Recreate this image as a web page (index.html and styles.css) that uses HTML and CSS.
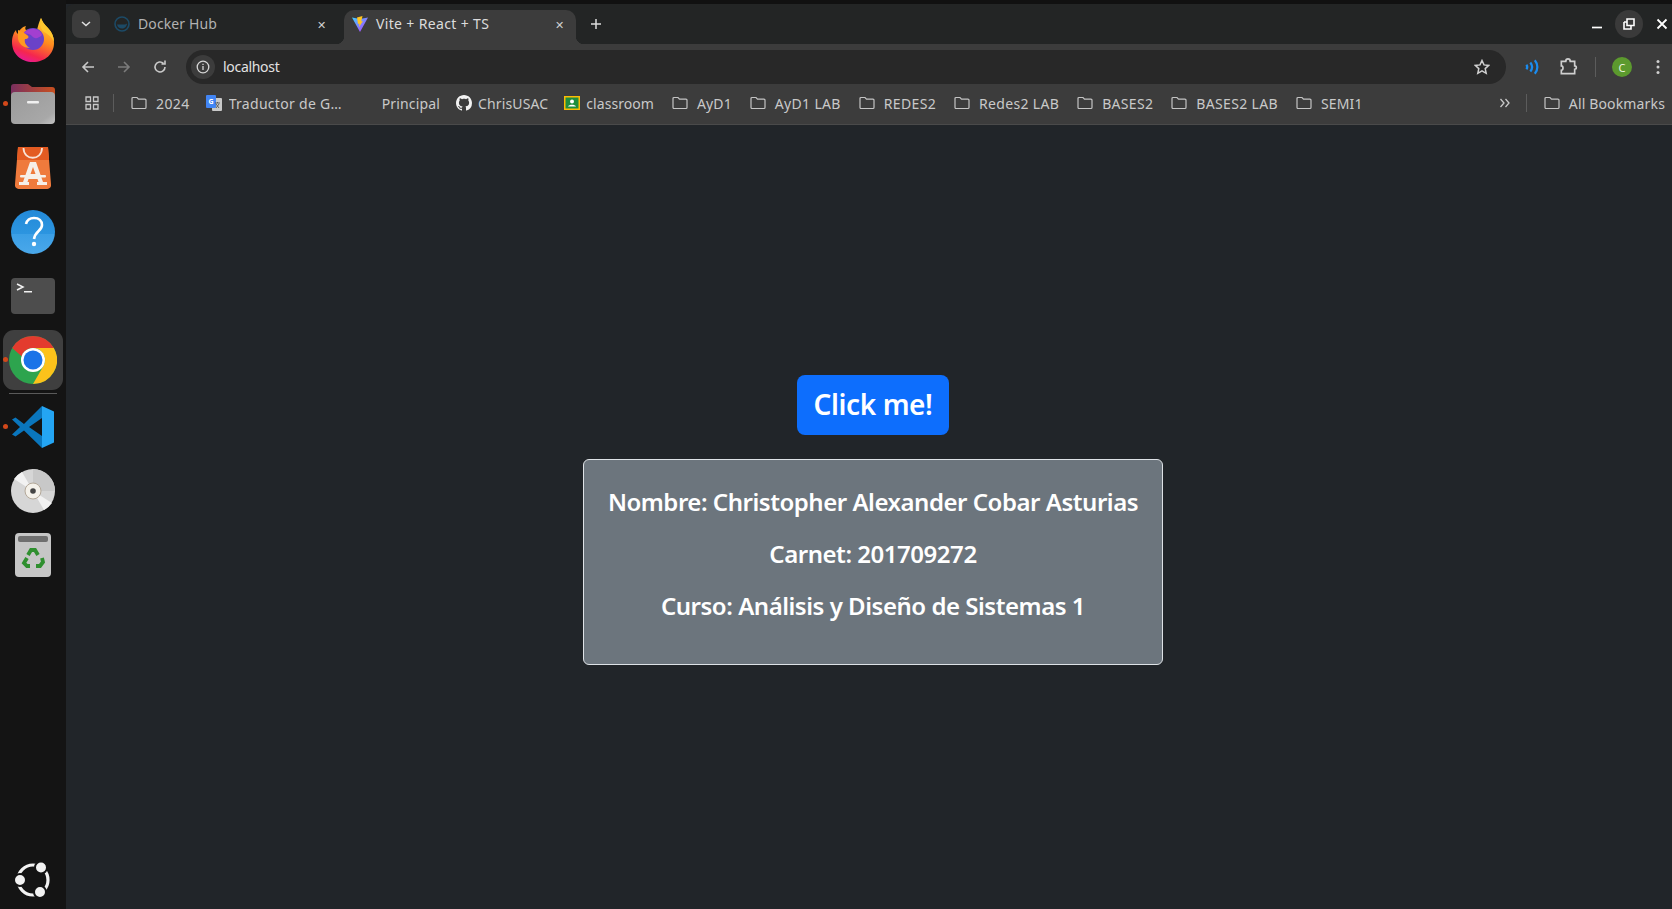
FILE: index.html
```html
<!DOCTYPE html>
<html lang="es">
<head>
<meta charset="utf-8">
<title>Vite + React + TS</title>
<link rel="stylesheet" href="styles.css">
</head>
<body>
<div class="desktop">
  <nav class="dock">
    <div class="dock-item">
      <svg class="di" viewBox="0 0 44 44" width="44" height="44"><defs><linearGradient id="ff" x1="0.7" y1="0" x2="0.3" y2="1"><stop offset="0" stop-color="#ffd33a"/><stop offset=".45" stop-color="#ff8a1e"/><stop offset=".8" stop-color="#f5274e"/><stop offset="1" stop-color="#e6199b"/></linearGradient></defs><path d="M30 0c1 3 3 6 7 10 5 5 6 11 6 15 0 11-9 19-21 19S1 36 1 24c0-5 2-10 4-12 0 2 1 3 2 4 1-4 4-7 8-8-1 2-1 3 0 4 3-1 8-1 11 0 1-4 2-8 4-12z" fill="url(#ff)"/><path d="M30 0c1 3 3 6 7 10 4 4 6 9 6 14-2-5-6-8-10-10-3-2-5-9-3-14z" fill="#ffc72e"/><circle cx="22" cy="21" r="11" fill="#6a42c8"/><path d="M12 16c4-1 7 0 9 2 2 3 6 3 10-1-1-4-5-6-9-6-4 0-8 2-10 5z" fill="#a33fd0"/><path d="M7 12c4 1 6 3 9 5 3 2 1 4-2 4-1 3 1 7 5 9-7 0-12-5-12-10 0-3 0-6 0-8z" fill="#ff9a1f"/></svg>
    </div>
    <div class="dock-item running">
      <svg class="di" viewBox="0 0 44 40" width="44" height="40"><defs><linearGradient id="fol" x1="0" y1="0" x2="1" y2="0"><stop offset="0" stop-color="#7a2f5f"/><stop offset="1" stop-color="#c9501f"/></linearGradient><linearGradient id="fg" x1="0" y1="0" x2="1" y2="1"><stop offset="0" stop-color="#9a9a9a"/><stop offset=".8" stop-color="#a8a8a8"/><stop offset="1" stop-color="#c4c4c4"/></linearGradient></defs><path d="M3 0h14l4 3h20a3 3 0 0 1 3 3v14H0V3a3 3 0 0 1 3-3z" fill="url(#fol)"/><rect y="8" width="44" height="32" rx="4" fill="url(#fg)"/><rect x="16" y="17" width="12" height="2.500" rx="1" fill="#f0f0f0"/></svg>
    </div>
    <div class="dock-item">
      <svg class="di" viewBox="0 0 36 42" width="36" height="42"><path d="M3 0h30l3 37a4 4 0 0 1-4 5H4a4 4 0 0 1-4-5z" fill="#ef7a3c"/><path d="M3 0h30l1 13H2z" fill="#e35b22"/><path d="M8.500 1c0 13 18.500 13 18.500 0" fill="none" stroke="#f8e2d6" stroke-width="1.800"/><path fill-rule="evenodd" d="M15 15h6l7 20h4v3H22v-3h1.500l-1-3h-9l-1 3H14v3H4v-3h4zM15.500 27h5L18 20z" fill="#f6efe8"/><rect x="5" y="28" width="26" height="2.500" rx="1" fill="#f6efe8"/></svg>
    </div>
    <div class="dock-item">
      <svg class="di" viewBox="0 0 44 44" width="44" height="44"><defs><linearGradient id="hp" x1="0" y1="0" x2="0" y2="1"><stop offset="0" stop-color="#2389d8"/><stop offset=".55" stop-color="#2c95e0"/><stop offset=".55" stop-color="#3b9fe6"/><stop offset="1" stop-color="#4aa8ea"/></linearGradient></defs><circle cx="22" cy="22" r="22" fill="url(#hp)"/><path d="M15 14c1-4 4-6 8-6 5 0 8 3 8 7 0 6-7 6-8 14" fill="none" stroke="#fff" stroke-width="2.600"/><circle cx="23" cy="34" r="2.200" fill="#fff"/></svg>
    </div>
    <div class="dock-item">
      <svg class="di" viewBox="0 0 44 36" width="44" height="36"><rect width="44" height="36" rx="4" fill="#4d4d4d"/><path d="M6 6l6 3-6 3" fill="none" stroke="#f2f2f2" stroke-width="1.500"/><rect x="13" y="13" width="8" height="1.500" fill="#f2f2f2"/></svg>
    </div>
    <div class="dock-item running active">
      <svg class="di" viewBox="0 0 48 48" width="48" height="48"><circle cx="24" cy="24" r="24" fill="#2da44e"/><path d="M24 0a24 24 0 0 1 20.800 12H24a12 12 0 0 0-11.400 8.200L3.200 12A24 24 0 0 1 24 0z" fill="#e33b2e"/><path d="M44.800 12A24 24 0 0 1 24 48l10.400-18A12 12 0 0 0 34.400 18 12 12 0 0 0 24 12z" fill="#fcc21b"/><circle cx="24" cy="24" r="12" fill="#fff"/><circle cx="24" cy="24" r="9.500" fill="#1a73e8"/></svg>
    </div>
    <div class="dock-sep"></div>
    <div class="dock-item running">
      <svg class="di" viewBox="0 0 42 42" width="42" height="42"><path d="M30 0 42 5.500v31L30 42z" fill="#24a5f3"/><path d="M30 0 12 18 3.500 11.500 0 13.500l8 7.500-8 7.500 3.500 2L12 24.500 30 42V30L17 21 30 12z" fill="#0a76bd"/></svg>
    </div>
    <div class="dock-item">
      <svg class="di" viewBox="0 0 44 44" width="44" height="44"><circle cx="22" cy="22" r="22" fill="#d6d6d6"/><path d="M22 22 3 10a22 22 0 0 1 8-7zM22 22l19 12a22 22 0 0 1-8 7z" fill="#f2f2f2"/><path d="M22 0a22 22 0 0 1 22 22H22z" fill="#c8c8c8"/><circle cx="22" cy="22" r="8" fill="#f4f1ea" stroke="#b3a899"/><circle cx="22" cy="22" r="2.800" fill="#444"/></svg>
    </div>
    <div class="dock-item">
      <svg class="di" viewBox="0 0 36 44" width="36" height="44"><rect width="36" height="44" rx="4" fill="#c6c6c6"/><rect x="3" y="3" width="30" height="6" rx="2" fill="#6f6f6f"/><g fill="none" stroke="#2f8f2f" stroke-width="3.800"><path d="M13 22l3-5h4l3 5"/><path d="M27 25l1 4-3 4h-4"/><path d="M15 33h-3l-3-3 3-5"/></g></svg>
    </div>
    <div class="dock-item dock-bottom">
      <svg class="di" viewBox="0 0 36 36" width="36" height="36"><circle cx="18" cy="18" r="15" fill="none" stroke="#f2f2f2" stroke-width="3.200"/><g fill="#f2f2f2" stroke="#141414" stroke-width="2"><circle cx="5" cy="18" r="6"/><circle cx="26" cy="5.500" r="6"/><circle cx="25" cy="30" r="6"/></g></svg>
    </div>
  </nav>

  <div class="browser">
    <div class="tabstrip">
      <button class="tab-menu"><svg viewBox="0 0 10 6" width="10" height="6"><path d="M1 1l4 3.500L9 1" fill="none" stroke="#e0e0e0" stroke-width="1.500"/></svg></button>
      <div class="tab">
        <svg viewBox="0 0 16 16" width="16" height="16"><circle cx="8" cy="8" r="7" fill="none" stroke="#1c4a66" stroke-width="1.600"/><path d="M3 8.500h8c1 0 1.500-1 2-1-.2 3-2.500 5-5 5s-4.500-1.500-5-4z" fill="#1c4a66"/></svg>
        <span class="tab-title">Docker Hub</span>
        <span class="tab-x">✕</span>
      </div>
      <div class="tab tab-active">
        <svg viewBox="0 0 16 16" width="16" height="16"><defs><linearGradient id="vt" x1="0" y1="0" x2="1" y2="1"><stop offset="0" stop-color="#41d1ff"/><stop offset="1" stop-color="#bd34fe"/></linearGradient></defs><path d="M0 1.500 8 3l8-1.500L8 16z" fill="url(#vt)"/><path d="M10.500 0 5 1.500 6 8l1.500-.5L7 11l4-6-1.800.4z" fill="#ffc41f"/></svg>
        <span class="tab-title">Vite + React + TS</span>
        <span class="tab-x">✕</span>
      </div>
      <span class="tab-plus"><svg viewBox="0 0 12 12" width="12" height="12"><path d="M6 1v10M1 6h10" stroke="#dcdcdc" stroke-width="1.500"/></svg></span>
      <div class="win-controls">
        <span class="win-btn"><svg viewBox="0 0 12 12" width="12" height="12"><path d="M1 9.500h10" stroke="#fff" stroke-width="1.700"/></svg></span>
        <span class="win-btn win-restore"><svg viewBox="0 0 12 12" width="12" height="12"><path d="M4 1h7v6.500H4zM1 4h3M1 4v7h7V7.500" fill="none" stroke="#fff" stroke-width="1.600"/></svg></span>
        <span class="win-btn win-close"><svg viewBox="0 0 12 12" width="12" height="12"><path d="M1.500 1.500l9 9M10.500 1.500l-9 9" stroke="#fff" stroke-width="1.800"/></svg></span>
      </div>
    </div>

    <div class="toolbar">
      <span class="tb-btn"><svg viewBox="0 0 16 16" width="16" height="16"><path d="M14 8H3M8 3 3 8l5 5" fill="none" stroke="#c9c9c9" stroke-width="1.600"/></svg></span>
      <span class="tb-btn"><svg viewBox="0 0 16 16" width="16" height="16"><path d="M2 8h11M8 3l5 5-5 5" fill="none" stroke="#7b7b7b" stroke-width="1.600"/></svg></span>
      <span class="tb-btn"><svg viewBox="0 0 16 16" width="16" height="16"><path d="M13 8a5 5 0 1 1-1.600-3.700M13 1.500V5H9.500" fill="none" stroke="#c9c9c9" stroke-width="1.600"/></svg></span>
      <div class="omnibox">
        <span class="info"><svg viewBox="0 0 14 14" width="14" height="14"><circle cx="7" cy="7" r="5.800" fill="none" stroke="#d6d6d6" stroke-width="1.300"/><path d="M7 6v4M7 3.800v1.200" stroke="#d6d6d6" stroke-width="1.300"/></svg></span>
        <span class="url">localhost</span>
        <svg class="star" viewBox="0 0 16 16" width="16" height="16"><path d="M8 1.500l2 4.400 4.800.5-3.600 3.200 1 4.700L8 11.900 3.800 14.300l1-4.700L1.200 6.400 6 5.900z" fill="none" stroke="#d0d0d0" stroke-width="1.500"/></svg>
      </div>
      <span class="tb-act"><svg viewBox="0 0 16 16" width="18" height="18"><path d="M3 6c1 1.300 1 2.700 0 4M6.500 4c2 2.500 2 5.500 0 8M10.500 2c3 3.500 3 8.500 0 12" fill="none" stroke="#1a8cf0" stroke-width="2"/></svg></span>
      <span class="tb-act"><svg viewBox="0 0 18 18" width="20" height="20"><path d="M3 4h4c0-3 4-3 4 0h4v4c2 0 2 3 0 3v4H3v-3c2 0 2-4 0-4z" fill="none" stroke="#cfcfcf" stroke-width="1.500"/></svg></span>
      <span class="tb-sep"></span>
      <span class="tb-act"><span class="avatar">C</span></span>
      <span class="tb-more"><svg viewBox="0 0 4 16" width="4" height="16"><circle cx="2" cy="2.500" r="1.500" fill="#cfcfcf"/><circle cx="2" cy="8" r="1.500" fill="#cfcfcf"/><circle cx="2" cy="13.500" r="1.500" fill="#cfcfcf"/></svg></span>
    </div>

    <div class="bookmarks">
      <svg class="bm-apps" viewBox="0 0 14 14" width="14" height="14"><path d="M1 1h4.500v4.500H1zM8.500 1H13v4.500H8.500zM1 8.500h4.500V13H1zM8.500 8.500H13V13H8.500z" fill="none" stroke="#c8c8c8" stroke-width="1.300"/></svg>
      <span class="bm-sep bm-sep-a"></span>
      <a class="bm folder bm-2024"><svg class="fo" viewBox="0 0 16 14" width="16" height="14"><path d="M1 2.500a1 1 0 0 1 1-1h4l1.500 1.700H14a1 1 0 0 1 1 1v7.300a1 1 0 0 1-1 1H2a1 1 0 0 1-1-1z" fill="none" stroke="#c4c4c4" stroke-width="1.200"/></svg>2024</a>
      <a class="bm bm-trad"><svg viewBox="0 0 16 16" width="16" height="16"><rect x="6" y="3" width="10" height="13" rx="1" fill="#c9c9c9"/><rect width="10" height="13" rx="1" fill="#4285f4"/><text class="gl" x="2.500" y="9">G</text><path d="M9 8h5M11.500 7v1M10 13l3-4M10 9l3 4" stroke="#555" stroke-width=".9" fill="none"/></svg><span class="bm-trunc">Traductor de G…</span></a>
      <a class="bm bm-principal">Principal</a>
      <a class="bm bm-gh"><svg viewBox="0 0 16 16" width="16" height="16"><path fill="#f2f2f2" d="M8 0C3.580 0 0 3.580 0 8c0 3.540 2.290 6.530 5.470 7.590.4.070.55-.17.550-.38 0-.19-.01-.82-.01-1.490-2.010.370-2.530-.49-2.690-.94-.09-.23-.48-.94-.82-1.130-.28-.15-.68-.52-.01-.53.630-.01 1.080.58 1.230.82.720 1.210 1.870.87 2.330.66.070-.52.280-.87.510-1.070-1.780-.2-3.640-.89-3.640-3.950 0-.87.310-1.590.82-2.150-.08-.2-.36-1.020.08-2.120 0 0 .670-.21 2.200.82.640-.18 1.320-.27 2-.27s1.360.090 2 .27c1.530-1.040 2.200-.82 2.200-.82.440 1.100.160 1.920.080 2.120.510.560.820 1.270.820 2.150 0 3.070-1.870 3.750-3.650 3.950.290.250.540.730.540 1.480 0 1.070-.010 1.930-.010 2.200 0 .210.150.460.550.380A8.010 8.010 0 0 0 16 8c0-4.420-3.580-8-8-8z"/></svg>ChrisUSAC</a>
      <a class="bm bm-class"><svg viewBox="0 0 16 16" width="16" height="16"><rect x="0" y="1" width="16" height="14" fill="#fbbc04"/><rect x="1.500" y="2.500" width="13" height="11" fill="#1e8e3e"/><circle cx="8" cy="6.500" r="2" fill="#fff"/><path d="M4 11.500c1-2.500 7-2.500 8 0z" fill="#fff"/></svg>classroom</a>
      <a class="bm folder"><svg class="fo" viewBox="0 0 16 14" width="16" height="14"><path d="M1 2.500a1 1 0 0 1 1-1h4l1.500 1.700H14a1 1 0 0 1 1 1v7.300a1 1 0 0 1-1 1H2a1 1 0 0 1-1-1z" fill="none" stroke="#c4c4c4" stroke-width="1.200"/></svg>AyD1</a>
      <a class="bm folder caps"><svg class="fo" viewBox="0 0 16 14" width="16" height="14"><path d="M1 2.500a1 1 0 0 1 1-1h4l1.500 1.700H14a1 1 0 0 1 1 1v7.300a1 1 0 0 1-1 1H2a1 1 0 0 1-1-1z" fill="none" stroke="#c4c4c4" stroke-width="1.200"/></svg>AyD1 LAB</a>
      <a class="bm folder caps"><svg class="fo" viewBox="0 0 16 14" width="16" height="14"><path d="M1 2.500a1 1 0 0 1 1-1h4l1.500 1.700H14a1 1 0 0 1 1 1v7.300a1 1 0 0 1-1 1H2a1 1 0 0 1-1-1z" fill="none" stroke="#c4c4c4" stroke-width="1.200"/></svg>REDES2</a>
      <a class="bm folder caps"><svg class="fo" viewBox="0 0 16 14" width="16" height="14"><path d="M1 2.500a1 1 0 0 1 1-1h4l1.500 1.700H14a1 1 0 0 1 1 1v7.300a1 1 0 0 1-1 1H2a1 1 0 0 1-1-1z" fill="none" stroke="#c4c4c4" stroke-width="1.200"/></svg>Redes2 LAB</a>
      <a class="bm folder caps"><svg class="fo" viewBox="0 0 16 14" width="16" height="14"><path d="M1 2.500a1 1 0 0 1 1-1h4l1.500 1.700H14a1 1 0 0 1 1 1v7.300a1 1 0 0 1-1 1H2a1 1 0 0 1-1-1z" fill="none" stroke="#c4c4c4" stroke-width="1.200"/></svg>BASES2</a>
      <a class="bm folder caps"><svg class="fo" viewBox="0 0 16 14" width="16" height="14"><path d="M1 2.500a1 1 0 0 1 1-1h4l1.500 1.700H14a1 1 0 0 1 1 1v7.300a1 1 0 0 1-1 1H2a1 1 0 0 1-1-1z" fill="none" stroke="#c4c4c4" stroke-width="1.200"/></svg>BASES2 LAB</a>
      <a class="bm folder"><svg class="fo" viewBox="0 0 16 14" width="16" height="14"><path d="M1 2.500a1 1 0 0 1 1-1h4l1.500 1.700H14a1 1 0 0 1 1 1v7.300a1 1 0 0 1-1 1H2a1 1 0 0 1-1-1z" fill="none" stroke="#c4c4c4" stroke-width="1.200"/></svg>SEMI1</a>
      <div class="bm-right">
        <svg viewBox="0 0 12 10" width="12" height="10"><path d="M1.500 1l3.500 4-3.500 4M6.500 1l3.500 4-3.500 4" fill="none" stroke="#c8c8c8" stroke-width="1.300"/></svg>
        <span class="bm-sep bm-sep-b"></span>
        <a class="bm folder bm-all"><svg class="fo" viewBox="0 0 16 14" width="16" height="14"><path d="M1 2.500a1 1 0 0 1 1-1h4l1.500 1.700H14a1 1 0 0 1 1 1v7.300a1 1 0 0 1-1 1H2a1 1 0 0 1-1-1z" fill="none" stroke="#c4c4c4" stroke-width="1.200"/></svg>All Bookmarks</a>
      </div>
    </div>

    <main class="content">
      <button class="btn-click">Click me!</button>
      <section class="card">
        <p>Nombre: Christopher Alexander Cobar Asturias</p>
        <p>Carnet: 201709272</p>
        <p>Curso: Análisis y Diseño de Sistemas 1</p>
      </section>
    </main>
  </div>
</div>
</body>
</html>
```

FILE: styles.css
```css
* { box-sizing: border-box; }
html, body { margin: 0; height: 100%; overflow: hidden; }
body { background: #111; font-family: "Noto Sans", sans-serif; }
.desktop { display: flex; height: 909px; }

.dock { width: 66px; flex: none; background: #141414; padding-top: 8px; display: flex; flex-direction: column; }
.dock-item { height: 64px; display: flex; align-items: center; justify-content: center; position: relative; flex: none; }
.dock-item.running::before { content: ""; position: absolute; left: 3px; top: 50%; margin-top: -3px; width: 5px; height: 5px; border-radius: 50%; background: #d2481a; }
.dock-item.active::after { content: ""; position: absolute; left: 3px; top: 2px; width: 60px; height: 60px; border-radius: 11px; background: #3f3f3f; }
.dock-item.active .di { position: relative; z-index: 1; }
.dock-item.active::before { z-index: 2; }
.dock-sep { height: 3px; margin: 0 9px; flex: none; display: flex; align-items: center; }
.dock-sep::before { content: ""; display: block; width: 100%; height: 1px; background: #5a5a5a; }
.dock-bottom { margin-top: auto; height: 56px; margin-bottom: 1px; }

.browser { flex: 1; min-width: 0; display: flex; flex-direction: column; margin-top: 4px; background: #212529; }

.tabstrip { height: 40px; background: #232525; display: flex; align-items: flex-start; padding: 6px 0 0 6px; border-top-left-radius: 8px; flex: none; }
.tab-menu { width: 28px; height: 28px; border: 0; border-radius: 8px; background: #3c3c3c; padding: 0; display: flex; align-items: center; justify-content: center; flex: none; }
.tab { width: 236px; height: 34px; margin-left: 4px; padding: 0 14px 6px 10px; display: flex; align-items: center; flex: none; font-size: 14px; letter-spacing: .1px; color: #b2b2b2; position: relative; }
.tab .tab-title { padding-bottom: 2px; }
.tab-active { width: 232px; margin-left: 4px; padding: 0 12px 6px 8px; background: #3c3c3c; color: #dcdcdc; border-radius: 10px 10px 0 0; letter-spacing: .35px; }
.tab-active::before, .tab-active::after { content: ""; position: absolute; bottom: 0; width: 8px; height: 8px; }
.tab-active::before { left: -8px; background: radial-gradient(circle at 0 0, transparent 8px, #3c3c3c 8.5px); }
.tab-active::after { right: -8px; background: radial-gradient(circle at 100% 0, transparent 8px, #3c3c3c 8.5px); }
.tab-title { margin-left: 8px; flex: 1; white-space: nowrap; }
.tab-x { font-size: 11px; color: #d0d0d0; }
.tab-plus { margin-left: 14px; height: 28px; display: flex; align-items: center; }
.win-controls { margin-left: auto; display: flex; align-items: center; height: 28px; }
.win-btn { width: 32px; height: 28px; display: flex; align-items: center; justify-content: center; }
.win-restore { width: 28px; margin: 0 9px 0 2px; border-radius: 50%; background: #3a3a3a; }
.win-close { width: 20px; }

.toolbar { height: 40px; background: #3c3c3c; display: flex; align-items: flex-end; padding-left: 4px; flex: none; }
.tb-btn { width: 36px; height: 34px; display: flex; align-items: center; justify-content: center; flex: none; }
.omnibox { flex: 1; height: 34px; margin-left: 8px; background: #282828; border-radius: 17px; display: flex; align-items: center; padding: 0 16px 0 5px; min-width: 0; }
.info { width: 24px; height: 24px; border-radius: 50%; background: #3c3c3c; display: flex; align-items: center; justify-content: center; flex: none; }
.url { margin-left: 8px; padding-bottom: 2px; font-size: 14px; letter-spacing: -.3px; color: #e2e2e2; flex: 1; }
.tb-act { width: 36px; height: 34px; display: flex; align-items: center; justify-content: center; flex: none; }
.omnibox + .tb-act { margin-left: 8px; }
.tb-sep { width: 18px; height: 20px; flex: none; align-self: center; margin-top: 6px; display: flex; justify-content: center; }
.tb-sep::before { content: ""; width: 1px; background: #5c5c5c; }
.avatar { width: 20px; height: 20px; border-radius: 50%; background: #5c9a2e; color: #e8f2de; font-size: 11px; display: flex; align-items: center; justify-content: center; }
.tb-more { width: 32px; height: 34px; padding-left: 16px; display: flex; align-items: center; flex: none; }

.bookmarks { height: 41px; background: #3c3c3c; border-bottom: 1px solid #4a4a4a; display: flex; align-items: center; padding: 0 0 2px 19px; flex: none; font-size: 14px; letter-spacing: .15px; color: #c9c9c9; }
.bm-apps { flex: none; }
.bm-sep { width: 1px; height: 18px; background: #5c5c5c; flex: none; }
.bm-sep-a { margin: 0 10px 0 14px; }
.bm { display: flex; align-items: center; gap: 7px; margin-left: 7px; margin-right: 11px; white-space: nowrap; flex: none; }
.folder { gap: 9px; }
.caps { letter-spacing: .33px; }
.bm-2024 { letter-spacing: .4px; margin-right: 9px; }
.bm-trunc { width: 114px; overflow: hidden; white-space: nowrap; letter-spacing: .3px; }
.bm-trad { margin-right: 9px; }
.bm-principal { margin-left: 30px; margin-right: 9px; }
.bm-gh { margin-right: 9px; gap: 6px; }
.bm-class { gap: 6px; letter-spacing: .05px; }
.gl { font-size: 7px; fill: #fff; font-weight: 700; font-family: "Noto Sans", sans-serif; }
.bm-right { margin-left: auto; display: flex; align-items: center; }
.bm-sep-b { margin: 0 9px 0 15px; }
.bm-all { margin-left: 8px; margin-right: 7px; }

.content { flex: 1; display: flex; flex-direction: column; align-items: center; justify-content: center; padding: 5px 0 0 8px; background: #212529; color: #fff; }
.btn-click { width: 152px; height: 60px; border: 0; border-radius: 8px; background: #0d6efd; color: #fff; font-family: "Noto Sans", sans-serif; font-size: 28px; font-weight: 600; letter-spacing: -.4px; padding: 0 0 2px; margin-bottom: 24px; }
.card { width: 580px; padding: 24px 0; border: 1px solid #dee2e6; border-radius: 6px; background: #6c757d; text-align: center; font-size: 24px; font-weight: 600; letter-spacing: -.47px; line-height: 36px; }
.card p { margin: 0 0 16px; white-space: nowrap; }
```
